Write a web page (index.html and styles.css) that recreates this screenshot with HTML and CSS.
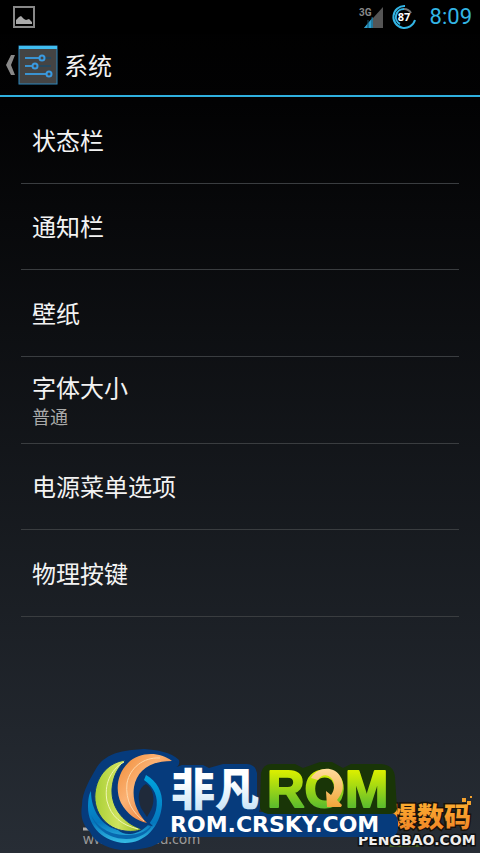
FILE: index.html
```html
<!DOCTYPE html>
<html lang="zh-CN">
<head>
    <meta charset="UTF-8">
    <meta name="viewport" content="width=device-width, initial-scale=1.0">
    <title>系统</title>
    <link rel="stylesheet" href="styles.css">
</head>
<body>
    <div class="status-bar">
        <svg class="picture-icon" width="22" height="22" viewBox="0 0 22 22">
            <rect x="1" y="1" width="20" height="20" fill="none" stroke="#888" stroke-width="2"/>
            <path d="M3 18v-4l3-3 2-1 3 3 2 1 3-1 3 3v2z" fill="#aaa"/>
        </svg>
        <div class="status-right">
            <svg width="26" height="24" viewBox="0 0 26 24">
                <path d="M25 2v21H6z" fill="#555"/>
                <path d="M15 12v11H6z" fill="#2d9fce"/>
                <path d="M10 15v8M14 12v11" stroke="#14506a"/>
                <text class="network" x="1" y="11">3G</text>
            </svg>
            <svg width="26" height="26" viewBox="0 0 26 26">
                <path d="M14 2A11 11 0 1 0 24 16" fill="none" stroke="#33b5e5" stroke-width="2"/>
                <path d="M13 5A8 8 0 0 0 9 20" fill="none" stroke="#33b5e5" stroke-width="2"/>
                <path d="M13 5A8 8 0 0 1 20 9" fill="none" stroke="#777" stroke-width="2"/>
                <text class="battery" x="13" y="17">87</text>
            </svg>
            <span class="clock">8:09</span>
        </div>
    </div>

    <header class="header">
        <a class="back" href="#" aria-label="返回">
            <svg width="10" height="20" viewBox="0 0 10 20">
                <path d="M5 0h4L5 10l4 10H5L0 10z" fill="#888"/>
            </svg>
            <svg width="40" height="40" viewBox="0 0 40 40">
                <rect x="1" y="1" width="38" height="38" fill="#444" stroke="#2f87bd" stroke-width="1"/>
                <rect x="1" y="1" width="38" height="3" fill="#40bdf0"/>
                <path d="M7 13h26M7 21h26M7 29h26" stroke="#26485e" stroke-width="2"/>
                <path d="M7 13h15M7 21h8M7 29h22" stroke="#3a92d0" stroke-width="2"/>
                <g fill="#444" stroke="#3a9ae0" stroke-width="2">
                    <circle cx="24" cy="13" r="2.500"/>
                    <circle cx="17" cy="21" r="2.500"/>
                    <circle cx="31" cy="29" r="2.500"/>
                </g>
            </svg>
        </a>
        <h1>系统</h1>
    </header>

    <ul class="list">
        <li><a href="#">状态栏</a></li>
        <li><a href="#">通知栏</a></li>
        <li><a href="#">壁纸</a></li>
        <li><a href="#">字体大小<small>普通</small></a></li>
        <li><a href="#">电源菜单选项</a></li>
        <li><a href="#">物理按键</a></li>
    </ul>

    <footer class="logos">
        <svg viewBox="0 0 480 110">
            <defs>
                <linearGradient id="green" x1="0" y1="0" x2="0" y2="1">
                    <stop offset="0.200" stop-color="#d8ee00"/>
                    <stop offset="0.800" stop-color="#5fbd2c"/>
                </linearGradient>
                <linearGradient id="leaf" x1="0" y1="0" x2="1" y2="0">
                    <stop offset="0" stop-color="#a9cf35"/>
                    <stop offset="0.500" stop-color="#cfe35e"/>
                    <stop offset="1" stop-color="#8fba1e"/>
                </linearGradient>
                <linearGradient id="orange" x1="0" y1="0" x2="1" y2="1">
                    <stop offset="0" stop-color="#f08a34"/>
                    <stop offset="0.400" stop-color="#fbb274"/>
                    <stop offset="1" stop-color="#e5641c"/>
                </linearGradient>
                <linearGradient id="blue" x1="0" y1="0" x2="0" y2="1">
                    <stop offset="0" stop-color="#00a5df"/>
                    <stop offset="0.700" stop-color="#0577bd"/>
                    <stop offset="1" stop-color="#35bce5"/>
                </linearGradient>
                <linearGradient id="ice" x1="0" y1="0" x2="0" y2="1">
                    <stop offset="0.400" stop-color="#fff"/>
                    <stop offset="1" stop-color="#b9dcf4"/>
                </linearGradient>
                <linearGradient id="gold" x1="0" y1="0" x2="0" y2="1">
                    <stop offset="0" stop-color="#ffdc9c"/>
                    <stop offset="1" stop-color="#f0a63a"/>
                </linearGradient>
                <linearGradient id="amber" x1="0" y1="0" x2="0" y2="1">
                    <stop offset="0" stop-color="#ffb632"/>
                    <stop offset="1" stop-color="#ef8026"/>
                </linearGradient>
            </defs>

            <!-- lower layer: site address and pengbao logo -->
            <path d="M83 76h10M83 86h12" stroke="#aaa" stroke-width="3"/>
            <text class="address" x="83" y="101">www.shendu.com</text>
            <path d="M389 99h32v5h-32z" fill="#42601c"/>
            <text class="pengbao-cn" x="390" y="84">爆数码</text>
            <path d="M462 55h4v4h-4zM467 58h4v4h-4zM470 53h2v2h-2z" fill="#f4a22e"/>
            <text class="pengbao" x="358" y="102">PENGBAO.COM</text>

            <!-- backing plates -->
            <path d="M82 62C82 49 90 36 97 24 107 9 126 7 144 6 157 7 171 9 179 17 180 22 178 24 174 25L182 22H203L209 25 223 21H247Q256 22 257 30V52Q262 59 259 69H388Q398 70 398 79V86Q397 94 388 94H166C156 106 137 107 121 107 104 105 93 97 90 89 83 82 80 74 82 62z" fill="#063b7c"/>
            <path d="M261 30Q263 21 272 21H295L303 25 320 19H332L343 25 351 21H381Q394 22 395 34L397 66Q396 71 389 71H268Q259 69 260 62z" fill="#193507"/>

            <!-- round crescent mark -->
            <path d="M146 41C153 45 156 56 151 67L147 74 141 65C137 55 138 45 146 41z" fill="#202a3a"/>
            <path d="M146 32C157 38 163 49 162 62 160 84 145 100 125 100 104 99 88 84 88 64 88 56 89 51 91 48 91 68 102 83 118 87 127 96 150 90 156 67 159 54 154 44 144 37z" fill="url(#blue)"/>
            <path d="M91 72C99 87 113 92 127 92 139 92 148 88 153 80 146 102 102 103 91 72z" fill="#0868ae"/>
            <path d="M126 17C109 19 97 32 95 50 93 70 107 86 125 88 133 89 139 88 142 86 125 81 111 66 112 46 113 33 118 24 126 17z" fill="url(#leaf)" stroke="#063b7c" stroke-width="1"/>
            <path d="M124 19C110 27 104 42 107 58 111 74 122 82 138 86" fill="none" stroke="#f0f6b5" stroke-width="1"/>
            <path d="M172 18C159 8 139 9 128 20 117 31 115 47 121 60 127 71 137 78 147 80 137 70 132 57 134 44 137 28 149 18 172 18z" fill="url(#orange)" stroke="#063b7c" stroke-width="4" paint-order="stroke"/>
            <path d="M160 15C143 14 130 25 127 40 125 58 133 70 144 78" fill="none" stroke="#ffd9aa" stroke-width="1"/>

            <text class="feifan" x="171" y="63">非凡</text>
            <text class="rom" x="267" y="64">ROM</text>
            <path d="M311 35C318 23 334 23 340 33 345 42 343 50 337 57L342 62 341 64 327 64 326 48 331 52C335 47 335 40 332 36 327 30 321 32 318 37z" fill="url(#gold)"/>
            <text class="crsky" x="170" y="89">ROM.CRSKY.COM</text>
        </svg>
    </footer>
</body>
</html>
```

FILE: styles.css
```css
* {
    box-sizing: border-box;
}

body {
    margin: 0;
    min-height: 100vh;
    display: flex;
    flex-direction: column;
    font-family: "Noto Sans CJK SC", sans-serif;
    color: #f3f3f3;
    background: linear-gradient(#000 0, #020203 12%, #272d35 100%);
}

a {
    color: inherit;
    text-decoration: none;
}

.status-bar {
    display: flex;
    justify-content: space-between;
    align-items: center;
    height: 34px;
    padding: 0 8px 0 13px;
    background: #000;
}

.status-right {
    display: flex;
    align-items: center;
    gap: 7px;
}

.network {
    font: bold 10px "Roboto", sans-serif;
    fill: #888;
}

.battery {
    font: bold 11px "Noto Sans", sans-serif;
    text-anchor: middle;
    fill: #fff;
}

.clock {
    margin-left: 6px;
    font-family: "Roboto", sans-serif;
    font-size: 22px;
    line-height: 34px;
    color: #33b5e5;
}

.header {
    display: flex;
    align-items: center;
    gap: 6px;
    height: 63px;
    padding-left: 6px;
    border-bottom: 2px solid #2fafdf;
}

.back {
    display: flex;
    align-items: center;
    gap: 2px;
}

h1 {
    margin: 0;
    font-size: 24px;
    font-weight: normal;
    line-height: 32px;
}

.list {
    display: grid;
    grid-auto-rows: 1fr;
    height: 520px;
    margin: 0 21px;
    padding: 0;
    list-style: none;
}

.list li {
    display: grid;
    border-bottom: 1px solid #3a3d40;
}

.list a {
    display: flex;
    flex-direction: column;
    justify-content: center;
    padding: 0 11px;
    font-size: 24px;
    line-height: 32px;
}

.list small {
    font-size: 18px;
    line-height: 26px;
    color: #aaa;
}

.logos {
    margin-top: auto;
}

.logos svg {
    display: block;
    width: 100%;
}

.address {
    font: 14px "Noto Sans", sans-serif;
    fill: #9b9b9b;
}

.pengbao-cn {
    font: 900 27px "Noto Sans CJK SC", sans-serif;
    fill: url(#amber);
    stroke: #17120a;
    stroke-width: 3px;
    paint-order: stroke;
}

.pengbao {
    font: bold 14px "DejaVu Sans", sans-serif;
    fill: #eee;
    stroke: #101010;
    stroke-width: 3px;
    paint-order: stroke;
}

.feifan {
    font: 900 44px "Noto Sans CJK SC", sans-serif;
    fill: url(#ice);
}

.rom {
    font: bold 52px "Liberation Sans", sans-serif;
    fill: url(#green);
    stroke: url(#green);
    stroke-width: 2px;
    stroke-linejoin: round;
}

.crsky {
    font: bold 22px "DejaVu Sans", sans-serif;
    fill: #fff;
}
```
